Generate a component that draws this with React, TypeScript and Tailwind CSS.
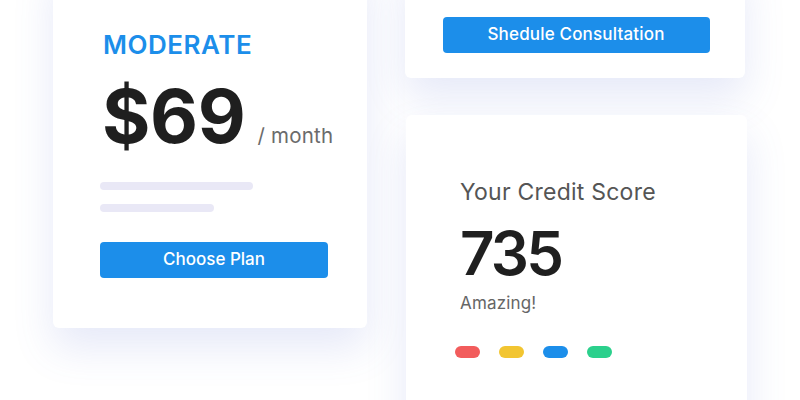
const font = { fontFamily: "Inter, 'Noto Sans', sans-serif" };

function Card({ className = "", children }: { className?: string; children?: React.ReactNode }) {
  return (
    <div
      className={`shrink-0 rounded-md bg-white shadow-[0_20px_40px_rgba(90,110,210,0.15)] ${className}`}
    >
      {children}
    </div>
  );
}

function PlanCard() {
  return (
    <Card className="w-[314px] h-[368px] -mt-[40px] flex flex-col pl-[47px]">
      <div className="mt-[70px] ml-[3px] text-[26px] leading-[30px] font-semibold tracking-[0.02em] text-[#1c8eea]">
        MODERATE
      </div>
      <div className="mt-[20px] ml-[2px] flex items-baseline whitespace-nowrap">
        <span className="text-[74px] leading-[72px] font-bold tracking-[-0.005em] text-[#1f1f1f]">$69</span>
        <span className="ml-[12px] text-[20.5px] tracking-[0.01em] text-[#6b6b6b]">/ month</span>
      </div>
      <div className="mt-[30px] h-[8px] w-[153px] rounded-full bg-[#e9e8f6]" />
      <div className="mt-[14px] h-[8px] w-[114px] rounded-full bg-[#e9e8f6]" />
      <button className="mt-[30px] h-[36px] w-[228px] rounded-[4px] bg-[#1c8eea] text-[17px] font-medium text-white">
        Choose Plan
      </button>
    </Card>
  );
}

function ConsultCard() {
  return (
    <Card className="w-[340px] h-[118px] -mt-[40px] flex flex-col items-center justify-end pb-[25px]">
      <button className="ml-[2px] h-[36px] w-[267px] rounded-[4px] bg-[#1c8eea] text-[17px] font-medium tracking-[0.01em] text-white">
        Shedule Consultation
      </button>
    </Card>
  );
}

function ScoreCard() {
  const dots = ["bg-[#f25c5c]", "bg-[#f2c531]", "bg-[#1c8eea]", "bg-[#2bd08c]"];
  return (
    <Card className="w-[341px] h-[320px] mt-[37px] ml-px flex flex-col pl-[54px]">
      <div className="mt-[63px] text-[23px] leading-[28px] tracking-[0.01em] text-[#555555]">Your Credit Score</div>
      <div className="mt-[17px] text-[60px] leading-[60px] font-semibold tracking-[-0.045em] text-[#1f1f1f]">735</div>
      <div className="mt-[10px] text-[17px] leading-[20px] tracking-[0.01em] text-[#666666]">Amazing!</div>
      <div className="mt-[33px] -ml-[5px] flex gap-[19px]">
        {dots.map((c) => (
          <div key={c} className={`h-[12px] w-[25px] rounded-full ${c}`} />
        ))}
      </div>
    </Card>
  );
}

export default function App() {
  return (
    <div className="w-[800px] h-[400px] overflow-hidden bg-white flex" style={font}>
      <div className="ml-[53px]">
        <PlanCard />
      </div>
      <div className="ml-[38px] flex flex-col">
        <ConsultCard />
        <ScoreCard />
      </div>
    </div>
  );
}
